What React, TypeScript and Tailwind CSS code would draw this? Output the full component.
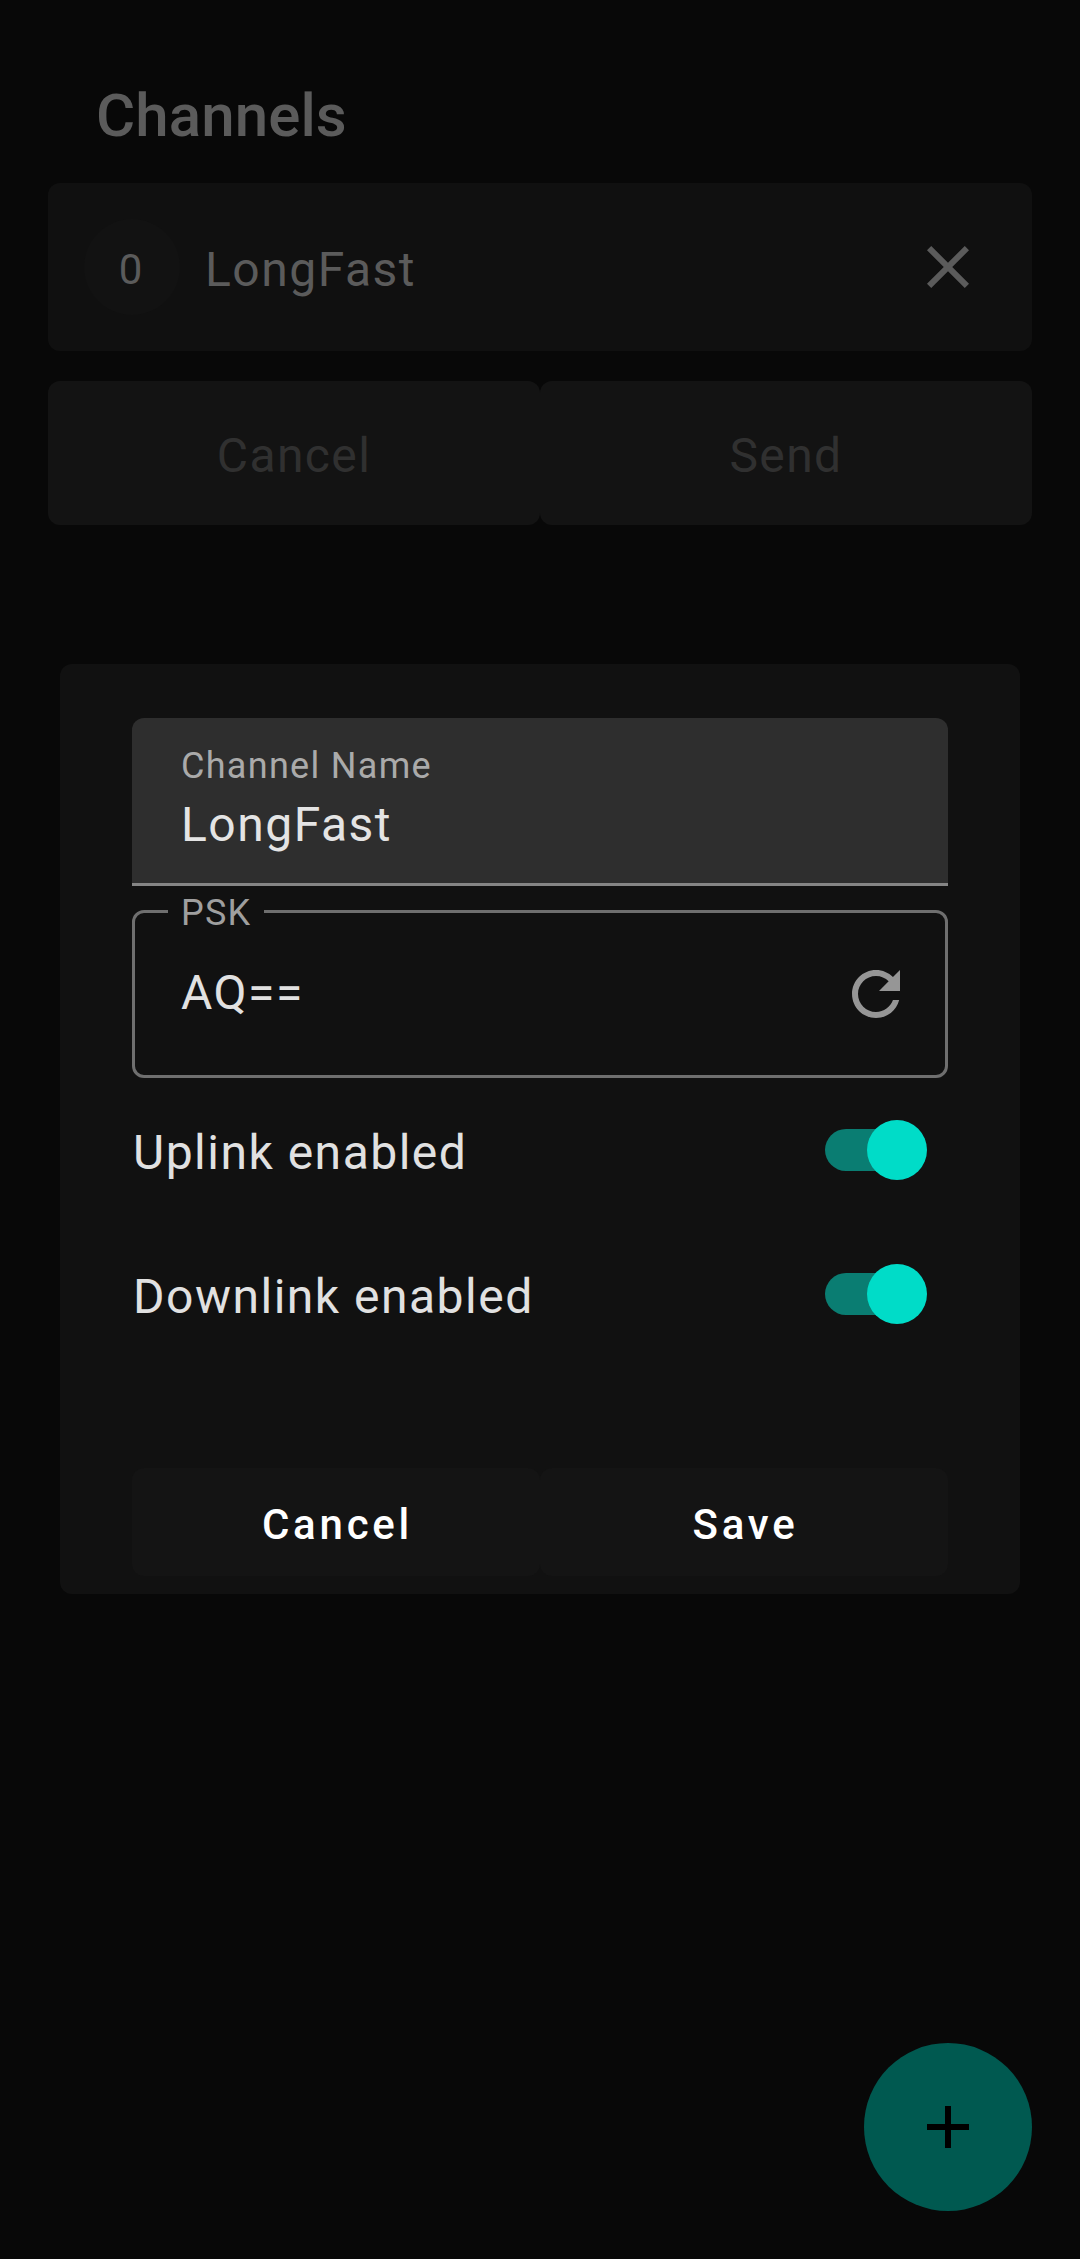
import React from "react";

function Toggle() {
  return (
    <span className="relative flex h-[60px] w-[102px] items-center" role="switch" aria-checked="true">
      <span className="h-[42px] w-[93px] rounded-full bg-[#0a7d72]" />
      <span className="absolute right-0 top-0 size-[60px] rounded-full bg-[#00dcc8]" />
    </span>
  );
}

function ToggleRow({ label }: { label: string }) {
  return (
    <div className="flex h-36 items-center justify-between pl-px pr-[21px]">
      <span className="pt-[5px] text-[48px] leading-[60px] tracking-[1.5px] text-[#e1e1e1]">{label}</span>
      <Toggle />
    </div>
  );
}

function ChannelsScreen() {
  return (
    <main className="flex h-full flex-col px-12 pb-12">
      <h1 className="mt-[80px] pl-12 text-[60px] font-medium leading-[72px] tracking-[0.1px] text-[#5b5b5b]">
        Channels
      </h1>
      <section className="mt-[31px] flex h-[168px] shrink-0 items-center rounded-xl bg-[#101010] pl-9 pr-12">
        <span className="flex size-24 items-center justify-center rounded-full bg-[#121212] pr-0.5 pt-[5px] text-[42px] leading-none tracking-[0.75px] text-[#5b5b5b]">
          0
        </span>
        <span className="flex-1 pl-[25px] pt-[5px] text-[48px] leading-[60px] tracking-[1.5px] text-[#5b5b5b]">
          LongFast
        </span>
        <svg viewBox="0 0 24 24" className="size-[72px]" fill="#5b5b5b">
          <path d="M19 6.41L17.59 5 12 10.59 6.41 5 5 6.41 10.59 12 5 17.59 6.41 19 12 13.41 17.59 19 19 17.59 13.41 12z" />
        </svg>
      </section>
      <div className="mt-[30px] flex h-36 shrink-0 text-[48px] leading-[60px] tracking-[1.4px] text-[#303030]">
        <button className="flex-1 rounded-xl bg-[#131313] pt-1.5">Cancel</button>
        <button className="flex-1 rounded-xl bg-[#131313] pt-1.5">Send</button>
      </div>
      <button className="mt-auto flex size-[168px] shrink-0 items-center justify-center self-end rounded-full bg-[#005950]">
        <svg viewBox="0 0 24 24" className="size-[72px]" fill="#000">
          <path d="M19 13h-6v6h-2v-6H5v-2h6V5h2v6h6z" />
        </svg>
      </button>
    </main>
  );
}

function ChannelDialog() {
  return (
    <div className="flex h-[930px] w-[960px] flex-col rounded-xl bg-[#111111] px-[72px] pt-[54px]">
      <div className="flex h-[168px] flex-col rounded-t-xl border-b-[3px] border-[#858585] bg-[#2e2e2e] pl-[49px] pr-12 pt-[26px]">
        <span className="text-[36px] leading-[44px] tracking-[1.3px] text-[#aaaaaa]">Channel Name</span>
        <span className="mt-[7px] text-[48px] leading-[60px] tracking-[1.5px] text-[#e4e4e4]">LongFast</span>
      </div>
      <div className="relative mt-6 flex h-[168px] items-center rounded-xl border-[3px] border-[#6f6f6f] pl-[46px] pr-[33px]">
        <span className="absolute left-[33px] top-[-22px] h-[44px] w-24 bg-[#111111] pl-[13px] text-[36px] leading-[44px] tracking-[1.2px] text-[#9f9f9f]">
          PSK
        </span>
        <span className="flex-1 pb-[3px] text-[48px] leading-[60px] tracking-[1.5px] text-[#e1e1e1]">AQ==</span>
        <svg viewBox="0 0 24 24" className="size-[72px]" fill="#969696">
          <path d="M17.65 6.35C16.2 4.9 14.21 4 12 4c-4.42 0-7.99 3.58-7.99 8s3.57 8 7.99 8c3.73 0 6.84-2.55 7.73-6h-2.08c-.82 2.33-3.04 4-5.65 4-3.31 0-6-2.69-6-6s2.69-6 6-6c1.66 0 3.14.69 4.22 1.78L13 11h7V4l-2.35 2.35z" />
        </svg>
      </div>
      <ToggleRow label="Uplink enabled" />
      <ToggleRow label="Downlink enabled" />
      <div className="mt-[102px] flex h-[108px] text-[42px] font-medium leading-[48px] tracking-[3.75px] text-white">
        <button className="flex-1 rounded-xl bg-[#141414] pl-[3px] pt-[5px]">Cancel</button>
        <button className="flex-1 rounded-xl bg-[#141414] pl-[3px] pt-[5px]">Save</button>
      </div>
    </div>
  );
}

export default function App() {
  return (
    <div className="relative h-[2259px] w-[1080px] overflow-hidden bg-[#080808] font-['Roboto',sans-serif]">
      <ChannelsScreen />
      <div className="absolute inset-0 flex justify-center pt-[664px]">
        <ChannelDialog />
      </div>
    </div>
  );
}
